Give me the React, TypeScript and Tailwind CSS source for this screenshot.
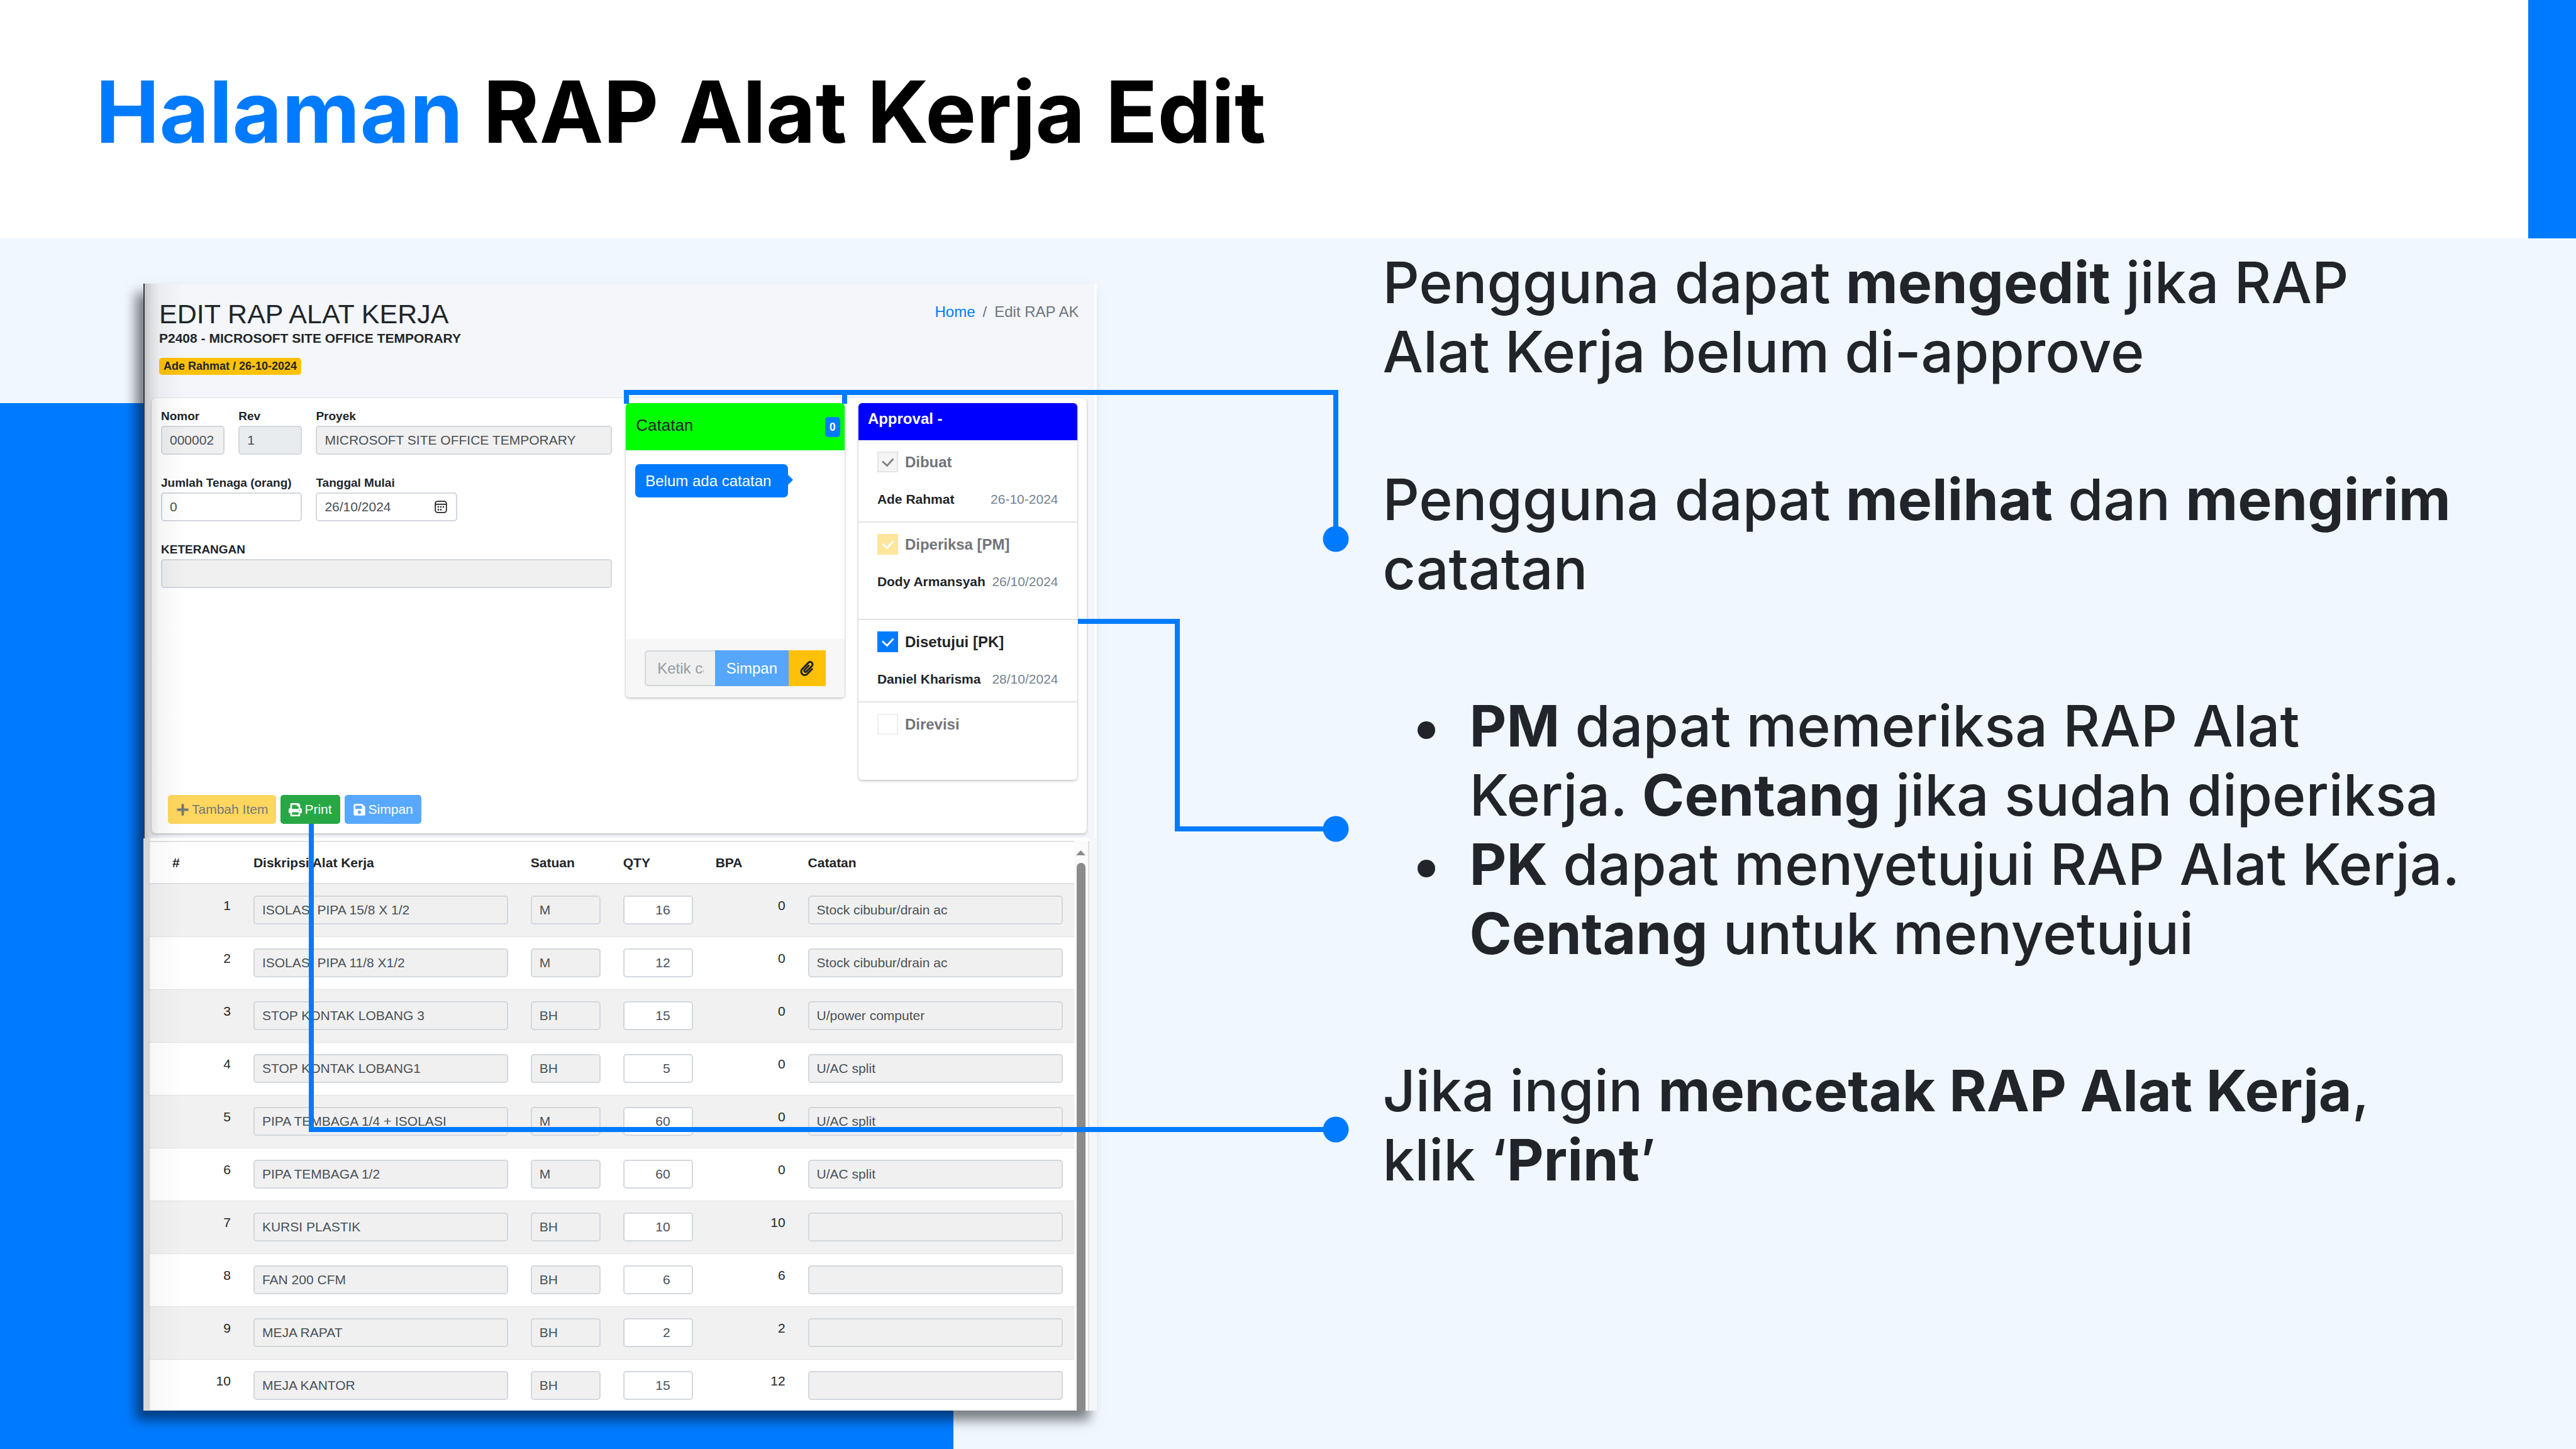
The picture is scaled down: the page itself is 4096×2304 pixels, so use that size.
import { FaPaperclip, FaPlus, FaPrint, FaSave } from "react-icons/fa";

type Item = {
  no: number;
  desc: string;
  unit: string;
  qty: number;
  bpa: number;
  note: string;
};

const items: Item[] = [
  { no: 1, desc: "ISOLASI PIPA 15/8 X 1/2", unit: "M", qty: 16, bpa: 0, note: "Stock cibubur/drain ac" },
  { no: 2, desc: "ISOLASI PIPA 11/8 X1/2", unit: "M", qty: 12, bpa: 0, note: "Stock cibubur/drain ac" },
  { no: 3, desc: "STOP KONTAK LOBANG 3", unit: "BH", qty: 15, bpa: 0, note: "U/power computer" },
  { no: 4, desc: "STOP KONTAK LOBANG1", unit: "BH", qty: 5, bpa: 0, note: "U/AC split" },
  { no: 5, desc: "PIPA TEMBAGA 1/4 + ISOLASI", unit: "M", qty: 60, bpa: 0, note: "U/AC split" },
  { no: 6, desc: "PIPA TEMBAGA 1/2", unit: "M", qty: 60, bpa: 0, note: "U/AC split" },
  { no: 7, desc: "KURSI PLASTIK", unit: "BH", qty: 10, bpa: 10, note: "" },
  { no: 8, desc: "FAN 200 CFM", unit: "BH", qty: 6, bpa: 6, note: "" },
  { no: 9, desc: "MEJA RAPAT", unit: "BH", qty: 2, bpa: 2, note: "" },
  { no: 10, desc: "MEJA KANTOR", unit: "BH", qty: 15, bpa: 12, note: "" },
];

const field =
  "block h-[46px] w-full min-w-0 rounded-[5px] border-2 border-[#d3d8de] px-3 text-[21px] leading-[31px] text-[#495057] outline-none";

function Field({
  id,
  label,
  value,
  className,
  tone,
  children,
}: {
  id: string;
  label: string;
  value: string;
  className: string;
  tone: string;
  children?: React.ReactNode;
}) {
  return (
    <div className={className}>
      <label htmlFor={id} className="block h-[30px] text-[19px] leading-[30px] font-bold whitespace-nowrap text-[#212529]">
        {label}
      </label>
      <div className="relative">
        <input id={id} type="text" defaultValue={value} className={`${field} ${tone}`} />
        {children}
      </div>
    </div>
  );
}

function CalendarIcon() {
  return (
    <svg viewBox="0 0 20 20" className="absolute top-[13px] right-[16px] size-5" aria-hidden="true">
      <rect x="1.2" y="1.2" width="17.6" height="17.6" rx="3.5" fill="none" stroke="#222" strokeWidth="1.8" />
      <path d="M1.5 5.8h17" stroke="#222" strokeWidth="1.8" />
      <g fill="#222">
        <circle cx="6" cy="10" r="1.3" />
        <circle cx="10" cy="10" r="1.3" />
        <circle cx="14" cy="10" r="1.3" />
        <circle cx="6" cy="14.4" r="1.3" />
        <circle cx="10" cy="14.4" r="1.3" />
      </g>
    </svg>
  );
}

function Approval({
  id,
  label,
  name,
  date,
  box,
  tick,
  text,
  className,
}: {
  id: string;
  label: string;
  name?: string;
  date?: string;
  box: string;
  tick?: string;
  text: string;
  className: string;
}) {
  return (
    <li className={`px-[30px] pt-[18px] ${className}`}>
      <div className="flex items-center gap-[11px]">
        <span className="relative size-[33px] shrink-0">
          <input
            id={id}
            type="checkbox"
            defaultChecked={Boolean(tick)}
            className={`block size-[33px] appearance-none ${box}`}
          />
          {tick && (
            <svg viewBox="0 0 33 33" className={`pointer-events-none absolute inset-0 ${tick}`} aria-hidden="true">
              <path d="M8 15.5 15.5 22.5 25.5 11.5" fill="none" stroke="currentColor" strokeWidth="2.8" />
            </svg>
          )}
        </span>
        <label htmlFor={id} className={`text-[24px] leading-[33px] font-bold whitespace-nowrap ${text}`}>
          {label}
        </label>
      </div>
      {name && (
        <div className="mt-[27px] flex justify-between text-[21px] leading-[31px] whitespace-nowrap">
          <span className="font-bold text-[#212529]">{name}</span>
          <span className="text-[#748290]">{date}</span>
        </div>
      )}
    </li>
  );
}

function TopPart() {
  return (
    <section className="relative border-r-4 border-l-2 border-r-[#fcfcfc] border-l-[#343a40] bg-[#f4f6f9]">
      <div className="flex items-start justify-between pt-[24px] pr-[24px] pl-[23px]">
        <div className="text-[#212529]">
          <h2 className="text-[43px] leading-[48px]">EDIT RAP ALAT KERJA</h2>
          <p className="mt-[2px] text-[21px] leading-[26px] font-bold">P2408 - MICROSOFT SITE OFFICE TEMPORARY</p>
          <span className="mt-[18px] block w-max rounded-[5px] bg-[#ffc107] px-[7px] text-[18px] leading-[27px] font-bold">
            Ade Rahmat / 26-10-2024
          </span>
        </div>
        <nav className="mt-[6px] flex gap-3 text-[24px] leading-[30px] text-[#6c757d]">
          <a href="#home" className="text-[#007bff]">
            Home
          </a>
          <span>/</span>
          <span>Edit RAP AK</span>
        </nav>
      </div>

      <div className="mt-[37px] mr-[12px] mb-[8px] ml-[11px] rounded-[6px] bg-white px-[15px] pt-[8px] pb-[15px] shadow-[0_0_2px_rgba(0,0,0,0.15),0_2px_4px_rgba(0,0,0,0.2)]">
        <div className="grid grid-cols-4 items-start gap-[22px]">
          <form className="col-span-2 grid grid-cols-6 gap-x-[22px] gap-y-[30px] pt-[6px]">
            <Field id="nomor" label="Nomor" value="000002" className="col-span-1" tone="bg-[#f0f0f0]" />
            <Field id="rev" label="Rev" value="1" className="col-span-1" tone="bg-[#e9ecef]" />
            <Field
              id="proyek"
              label="Proyek"
              value="MICROSOFT SITE OFFICE TEMPORARY"
              className="col-span-4"
              tone="bg-[#f0f0f0]"
            />
            <Field id="tenaga" label="Jumlah Tenaga (orang)" value="0" className="col-span-2" tone="bg-white" />
            <Field id="mulai" label="Tanggal Mulai" value="26/10/2024" className="col-span-2" tone="bg-white">
              <CalendarIcon />
            </Field>
            <Field id="ket" label="KETERANGAN" value="" className="col-span-6" tone="bg-[#f0f0f0]" />
          </form>

          <div className="rounded-[6px] bg-white shadow-[0_0_2px_rgba(0,0,0,0.2),0_2px_4px_rgba(0,0,0,0.2)]">
            <div className="flex h-[75px] items-center justify-between rounded-t-[6px] bg-[#00ff00] pr-[7px] pl-[16px]">
              <h3 className="pb-[6px] text-[26px] leading-[32px] text-[#212529]">Catatan</h3>
              <span className="w-[24px] rounded-[5px] bg-[#007bff] text-center text-[18px] leading-[32px] font-bold text-white">
                0
              </span>
            </div>
            <div className="h-[300px] pt-[22px] pl-[15px]">
              <div className="relative w-max rounded-[7px] bg-[#007bff] pr-[27px] pl-[16px] text-[24px] leading-[53px] text-white">
                Belum ada catatan
                <svg viewBox="0 0 8 16" className="absolute top-[17px] left-full h-4 w-2" aria-hidden="true">
                  <path d="M0 0 8 8 0 16Z" fill="#007bff" />
                </svg>
              </div>
            </div>
            <div className="flex rounded-b-[6px] bg-[#f7f7f7] px-[30px] py-[18px]">
              <input
                type="text"
                aria-label="Ketik catatan"
                placeholder="Ketik catatan"
                className="h-[57px] min-w-0 flex-1 rounded-l-[6px] border-2 border-r-0 border-[#d3d8de] bg-[#f0f0f0] px-[18px] text-[24px] outline-none placeholder:text-[#939ba2]"
              />
              <button type="button" className="h-[57px] w-[117px] bg-[#56a6fc] text-[24px] text-white">
                Simpan
              </button>
              <button
                type="button"
                aria-label="Lampirkan"
                className="flex h-[57px] w-[59px] items-center justify-center bg-[#ffc107] text-[24px] text-[#212529]"
              >
                <FaPaperclip />
              </button>
            </div>
          </div>

          <div className="rounded-[6px] bg-white shadow-[0_0_2px_rgba(0,0,0,0.2),0_2px_4px_rgba(0,0,0,0.2)]">
            <h3 className="h-[59px] rounded-t-[6px] bg-[#0000ff] pt-[9px] pl-[15px] text-[24px] leading-[32px] font-bold text-white">
              Approval -
            </h3>
            <ul>
              <Approval
                id="dibuat"
                label="Dibuat"
                name="Ade Rahmat"
                date="26-10-2024"
                box="bg-[#f4f4f4] border-2 border-[#e4e4e4]"
                tick="text-[#808080]"
                text="text-[#717478]"
                className="h-[131px] border-b-2 border-[#e2e3e4]"
              />
              <Approval
                id="diperiksa"
                label="Diperiksa [PM]"
                name="Dody Armansyah"
                date="26/10/2024"
                box="bg-[#ffe69c]"
                tick="text-white"
                text="text-[#717478]"
                className="h-[155px] border-b-2 border-[#e2e3e4]"
              />
              <Approval
                id="disetujui"
                label="Disetujui [PK]"
                name="Daniel Kharisma"
                date="28/10/2024"
                box="bg-[#007bff]"
                tick="text-white"
                text="text-[#212529]"
                className="h-[131px] border-b-2 border-[#e2e3e4]"
              />
              <Approval
                id="direvisi"
                label="Direvisi"
                box="bg-white border-2 border-[#eeeeee]"
                text="text-[#717478]"
                className="h-[123px]"
              />
            </ul>
          </div>
        </div>

        <div className="mt-[24px] ml-[11px] flex gap-[7px] text-[21px] whitespace-nowrap">
          <button type="button" className="flex h-[46px] items-center gap-1 rounded-[5px] bg-[#ffd75e] px-[13px] text-[#72777b]">
            <FaPlus />
            Tambah Item
          </button>
          <button type="button" className="flex h-[46px] items-center gap-1 rounded-[5px] bg-[#28a745] px-[13px] text-white">
            <FaPrint />
            Print
          </button>
          <button type="button" className="flex h-[46px] items-center gap-1 rounded-[5px] bg-[#59a8ff] px-[13px] text-white">
            <FaSave />
            Simpan
          </button>
        </div>
      </div>
      <div className="pointer-events-none absolute inset-y-0 left-0 w-[64px] bg-[linear-gradient(to_right,rgba(0,0,0,0.2)_0px,rgba(0,0,0,0.1)_11px,rgba(0,0,0,0.04)_24px,transparent)]" />
    </section>
  );
}

function ItemsTable() {
  return (
    <section className="relative flex flex-1 bg-[#f4f6f9] pr-[12px] pl-[10px]">
      <div className="flex min-w-0 flex-1 border-t-4 border-white bg-white">
        <table className="min-w-0 flex-1 table-fixed border-collapse text-[21px] leading-[31px] text-[#212529]">
          <colgroup>
            <col className="w-[10%]" />
            <col className="w-[30%]" />
            <col className="w-[10%]" />
            <col className="w-[10%]" />
            <col className="w-[10%]" />
            <col className="w-[30%]" />
          </colgroup>
          <thead>
            <tr className="h-[67px] border-t-2 border-b-2 border-[#dee2e6] text-left">
              <th className="pl-[36px]">#</th>
              <th className="px-[18px]">Diskripsi Alat Kerja</th>
              <th className="px-[18px]">Satuan</th>
              <th className="px-[18px]">QTY</th>
              <th className="px-[18px]">BPA</th>
              <th className="px-[18px]">Catatan</th>
            </tr>
          </thead>
          <tbody>
            {items.map((it) => (
              <tr key={it.no} className="h-[84px] border-b border-[#dee2e6] align-top last:h-[81px] odd:bg-[#f1f1f1]">
                <td className="px-[18px] pt-[18px] text-right">{it.no}</td>
                <td className="px-[18px] pt-[18px]">
                  <input aria-label={`Diskripsi ${it.no}`} readOnly value={it.desc} className={`${field} bg-[#f0f0f0]`} />
                </td>
                <td className="px-[18px] pt-[18px]">
                  <input aria-label={`Satuan ${it.no}`} readOnly value={it.unit} className={`${field} bg-[#f0f0f0]`} />
                </td>
                <td className="px-[18px] pt-[18px]">
                  <input
                    aria-label={`QTY ${it.no}`}
                    defaultValue={it.qty}
                    className="block h-[46px] w-full min-w-0 rounded-[5px] border-2 border-[#d3d8de] bg-white pr-[34px] text-right text-[21px] leading-[31px] text-[#495057] outline-none"
                  />
                </td>
                <td className="px-[18px] pt-[18px] text-right">{it.bpa}</td>
                <td className="px-[18px] pt-[18px]">
                  <input aria-label={`Catatan ${it.no}`} readOnly value={it.note} className={`${field} bg-[#f0f0f0]`} />
                </td>
              </tr>
            ))}
          </tbody>
        </table>
        <div className="flex w-[24px] shrink-0 flex-col items-center border-r-2 border-[#e0e0e0] bg-[#fbfbfb] pt-[15px]">
          <svg viewBox="0 0 15 8" className="h-2 w-[15px]" aria-hidden="true">
            <path d="M7.5 0 15 8H0Z" fill="#8b8b8b" />
          </svg>
          <div className="mt-[12px] w-[14px] flex-1 rounded-t-[7px] bg-[#8b8b8b]" />
        </div>
      </div>
      <div className="pointer-events-none absolute inset-y-0 left-0 w-[64px] bg-[linear-gradient(to_right,rgba(0,0,0,0.12)_0px,rgba(0,0,0,0.13)_10px,rgba(0,0,0,0.03)_11px,transparent)]" />
    </section>
  );
}

function Connectors() {
  return (
    <svg
      viewBox="0 0 4096 2304"
      className="pointer-events-none absolute top-0 left-0 w-full"
      fill="none"
      stroke="#007bff"
      strokeWidth="8"
      aria-hidden="true"
    >
      <path d="M996 642V624H2124V857M1343 624V642" />
      <path d="M1714 988H1872V1318H2124" />
      <path d="M495 1310V1796H2124" />
      <g fill="#007bff" stroke="none">
        <circle cx="2124" cy="857" r="20.5" />
        <circle cx="2124" cy="1318" r="20.5" />
        <circle cx="2124" cy="1796" r="20.5" />
      </g>
    </svg>
  );
}

function Bullet({ children }: { children: React.ReactNode }) {
  return (
    <li className="flex gap-[55px]">
      <span className="mt-[48px] size-[28px] shrink-0 rounded-full bg-[#212529]" />
      <div>{children}</div>
    </li>
  );
}

export default function App() {
  return (
    <div className="relative flex min-h-screen flex-col overflow-hidden bg-[#f0f7ff] font-['Inter',sans-serif]">
      <header className="flex h-[379px] justify-between bg-white pl-[152px]">
        <h1 className="pt-[94px] text-[136px] leading-[168px] font-bold whitespace-nowrap text-black">
          <span className="text-[#007bff]">Halaman</span> RAP Alat Kerja Edit
        </h1>
        <div className="w-[76px] bg-[#007bff]" />
      </header>

      <main className="relative flex flex-1">
        <div className="absolute top-[262px] bottom-0 left-0 w-[37%] bg-[#007bff]" />
        <article className="relative mt-[72px] mb-[61px] ml-[228px] flex w-[37%] shrink-0 flex-col font-['Liberation_Sans',Arial,sans-serif] shadow-[-12px_15px_18px_rgba(0,0,0,0.5)]">
          <TopPart />
          <ItemsTable />
        </article>

        <div className="min-w-0 flex-1 pt-[15px] pr-[140px] pl-[455px] text-[91px] leading-[110px] font-medium text-[#212529]">
          <p>
            Pengguna dapat <b>mengedit</b> jika RAP
            <br />
            Alat Kerja belum di-approve
          </p>
          <p className="mt-[125px]">
            Pengguna dapat <b>melihat</b> dan <b>mengirim</b>
            <br />
            catatan
          </p>
          <ul className="mt-[140px] pl-[55px]">
            <Bullet>
              <b>PM</b> dapat memeriksa RAP Alat
              <br />
              Kerja. <b>Centang</b> jika sudah diperiksa
            </Bullet>
            <Bullet>
              <b>PK</b> dapat menyetujui RAP Alat Kerja.
              <br />
              <b>Centang</b> untuk menyetujui
            </Bullet>
          </ul>
          <p className="mt-[140px]">
            Jika ingin <b>mencetak RAP Alat Kerja</b>,
            <br />
            klik ‘<b>Print</b>’
          </p>
        </div>
      </main>
      <Connectors />
    </div>
  );
}
